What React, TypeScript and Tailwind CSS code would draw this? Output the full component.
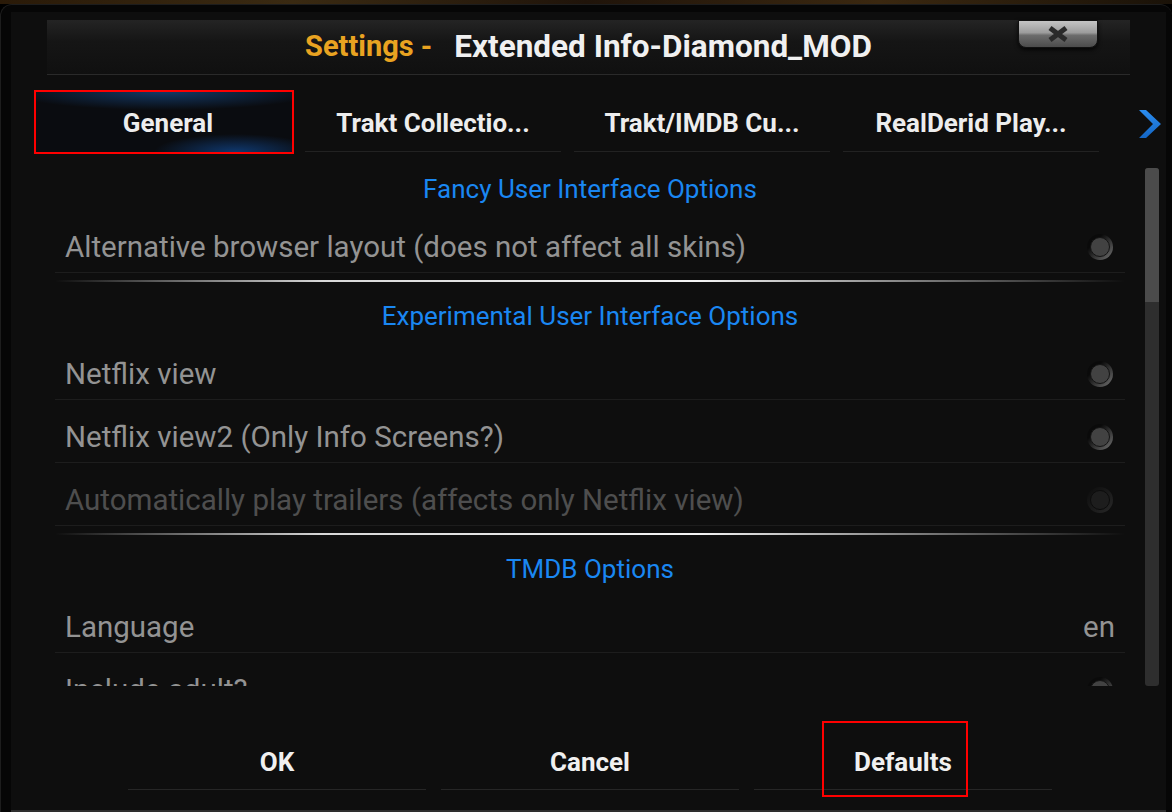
import { ReactNode } from "react";

const font = { fontFamily: "Roboto, 'Noto Sans', 'Liberation Sans', sans-serif" };

function Radio({ dim }: { dim?: boolean }) {
  return (
    <div
      className={
        dim
          ? "w-[26px] h-[26px] rounded-full p-[3px] bg-[linear-gradient(135deg,#0c0c0c,#282828)]"
          : "w-[26px] h-[26px] rounded-full p-[3px] bg-[linear-gradient(135deg,#0a0a0a_30%,#737373)]"
      }
    >
      <div
        className={
          dim
            ? "w-full h-full rounded-full bg-[#1d1d1d] border border-[#0c0c0c]"
            : "w-full h-full rounded-full bg-[#424242] border border-[#141414]"
        }
      />
    </div>
  );
}

function Row({ label, dim, right }: { label: string; dim?: boolean; right?: ReactNode }) {
  return (
    <div className="h-[63px] shrink-0 flex items-center justify-between pl-[10px] pr-[12px] pt-[12px] border-b border-[#1d1d1d]">
      <span className={dim ? "text-[29.5px] text-[#4e4e4e]" : "text-[29.5px] text-[#939393]"}>{label}</span>
      {right}
    </div>
  );
}

function Header({ title }: { title: string }) {
  return (
    <div className="h-[54px] shrink-0 pt-[18px] text-center text-[26px] leading-[30px] text-[#1a87f2]">{title}</div>
  );
}

function Separator() {
  return (
    <div className="h-[10px] shrink-0 flex items-end pb-[1px]">
      <div className="h-[2px] w-full bg-[linear-gradient(90deg,transparent,#d8d8d8_25%,#f4f4f4_60%,transparent)]" />
    </div>
  );
}

const tabs = ["General", "Trakt Collectio...", "Trakt/IMDB Cu...", "RealDerid Play..."];

export default function App() {
  return (
    <div style={font} className="w-[1172px] h-[812px] bg-black overflow-hidden flex flex-col">
      <div className="h-[4px] shrink-0 bg-[linear-gradient(90deg,#2a1a08,#3a2a12,#20140a,#3b2810,#1a1208)]" />
      <div className="flex-1 flex flex-col rounded-t-[12px] bg-[#060606] border-t border-l border-[#1d1d1d] pl-[10px] pt-[7px] pr-[6px]">
        <div className="flex-1 flex flex-col bg-[#0e0e0e] border-b-2 border-[#2e2e2e]">
          {/* title bar */}
          <div className="h-[63px] shrink-0 pt-[8px] relative">
            <div className="h-[55px] mx-[36px] flex items-center justify-center bg-[linear-gradient(180deg,#242424,#151515_40%,#101010)] border-b border-[#2a2a2a] pb-[1px]">
              <span className="text-[29px] font-bold text-[#e9a321]">Settings -</span>
              <span className="text-[31.5px] font-bold text-[#f0f0f0] ml-[22px]">Extended Info-Diamond_MOD</span>
            </div>
            <div className="absolute left-[1007px] top-[8px] w-[80px] h-[28px] rounded-b-[8px] border border-[#111] bg-[linear-gradient(180deg,#c4c4c4,#9c9c9c_45%,#6c6c6c_55%,#4c4c4c)] flex items-center justify-center shadow-[0_2px_4px_rgba(0,0,0,0.8)]">
              <svg width="22" height="16" viewBox="0 0 22 16">
                <path d="M3 2 L19 14 M19 2 L3 14" stroke="#2a2a2a" strokeWidth="5" />
              </svg>
            </div>
          </div>

          {/* tabs */}
          <div className="h-[81px] shrink-0 flex items-center pl-[25px] pt-[13px]">
            <div className="flex gap-[13px]">
              {tabs.map((t, i) =>
                i === 0 ? (
                  <div key={t} className="relative w-[256px] h-[60px]">
                    <div className="w-full h-full flex items-center justify-center pt-[3px] pl-[8px] text-[26px] font-bold text-[#ededed] bg-[#0a0c10] bg-[radial-gradient(ellipse_60%_30%_at_50%_0%,rgba(30,110,205,0.45),transparent),radial-gradient(ellipse_32%_30%_at_78%_100%,rgba(20,100,205,0.5),transparent)]">
                      {t}
                    </div>
                    <div className="absolute -inset-[2px] border-2 border-[#ff0000]" />
                  </div>
                ) : (
                  <div
                    key={t}
                    className="w-[256px] h-[60px] flex items-center justify-center pt-[3px] text-[26px] font-bold text-[#ededed] border-b border-[#222]"
                  >
                    {t}
                  </div>
                )
              )}
            </div>
            <svg className="ml-[39px] mt-[4px]" width="24" height="28" viewBox="0 0 24 28">
              <defs>
                <linearGradient id="chev" x1="0" y1="0" x2="0" y2="1">
                  <stop offset="0" stopColor="#2b8df0" />
                  <stop offset="1" stopColor="#1466c4" />
                </linearGradient>
              </defs>
              <polygon points="1,0 8,0 23,14 8,28 1,28 15,14" fill="url(#chev)" />
            </svg>
          </div>

          {/* list + scrollbar */}
          <div className="flex shrink-0 h-[530px]">
            <div className="ml-[44px] w-[1070px] h-[530px] overflow-hidden flex flex-col">
              <Header title="Fancy User Interface Options" />
              <Row label="Alternative browser layout (does not affect all skins)" right={<Radio />} />
              <Separator />
              <Header title="Experimental User Interface Options" />
              <Row label="Netflix view" right={<Radio />} />
              <Row label="Netflix view2 (Only Info Screens?)" right={<Radio />} />
              <Row label="Automatically play trailers (affects only Netflix view)" dim right={<Radio dim />} />
              <Separator />
              <Header title="TMDB Options" />
              <Row label="Language" right={<span className="text-[29.5px] text-[#939393] -mr-[2px]">en</span>} />
              <Row label="Include adult?" right={<Radio />} />
            </div>
            <div className="ml-[20px] mt-[12px] w-[14px] h-[518px] rounded-[3px] bg-[#2e2e2e] overflow-hidden">
              <div className="h-[134px] bg-[#4b4b4b]" />
            </div>
          </div>

          {/* buttons */}
          <div className="flex gap-[15px] pl-[117px] pt-[50px]">
            {["OK", "Cancel", "Defaults"].map((b) => (
              <div
                key={b}
                className="relative w-[298px] h-[54px] flex items-center justify-center text-[26px] font-bold text-[#f0f0f0] border-b border-[#262626]"
              >
                {b}
                {b === "Defaults" && (
                  <div className="absolute left-[68px] -top-[15px] w-[146px] h-[76px] border-2 border-[#ff0000]" />
                )}
              </div>
            ))}
          </div>
        </div>
      </div>
    </div>
  );
}
